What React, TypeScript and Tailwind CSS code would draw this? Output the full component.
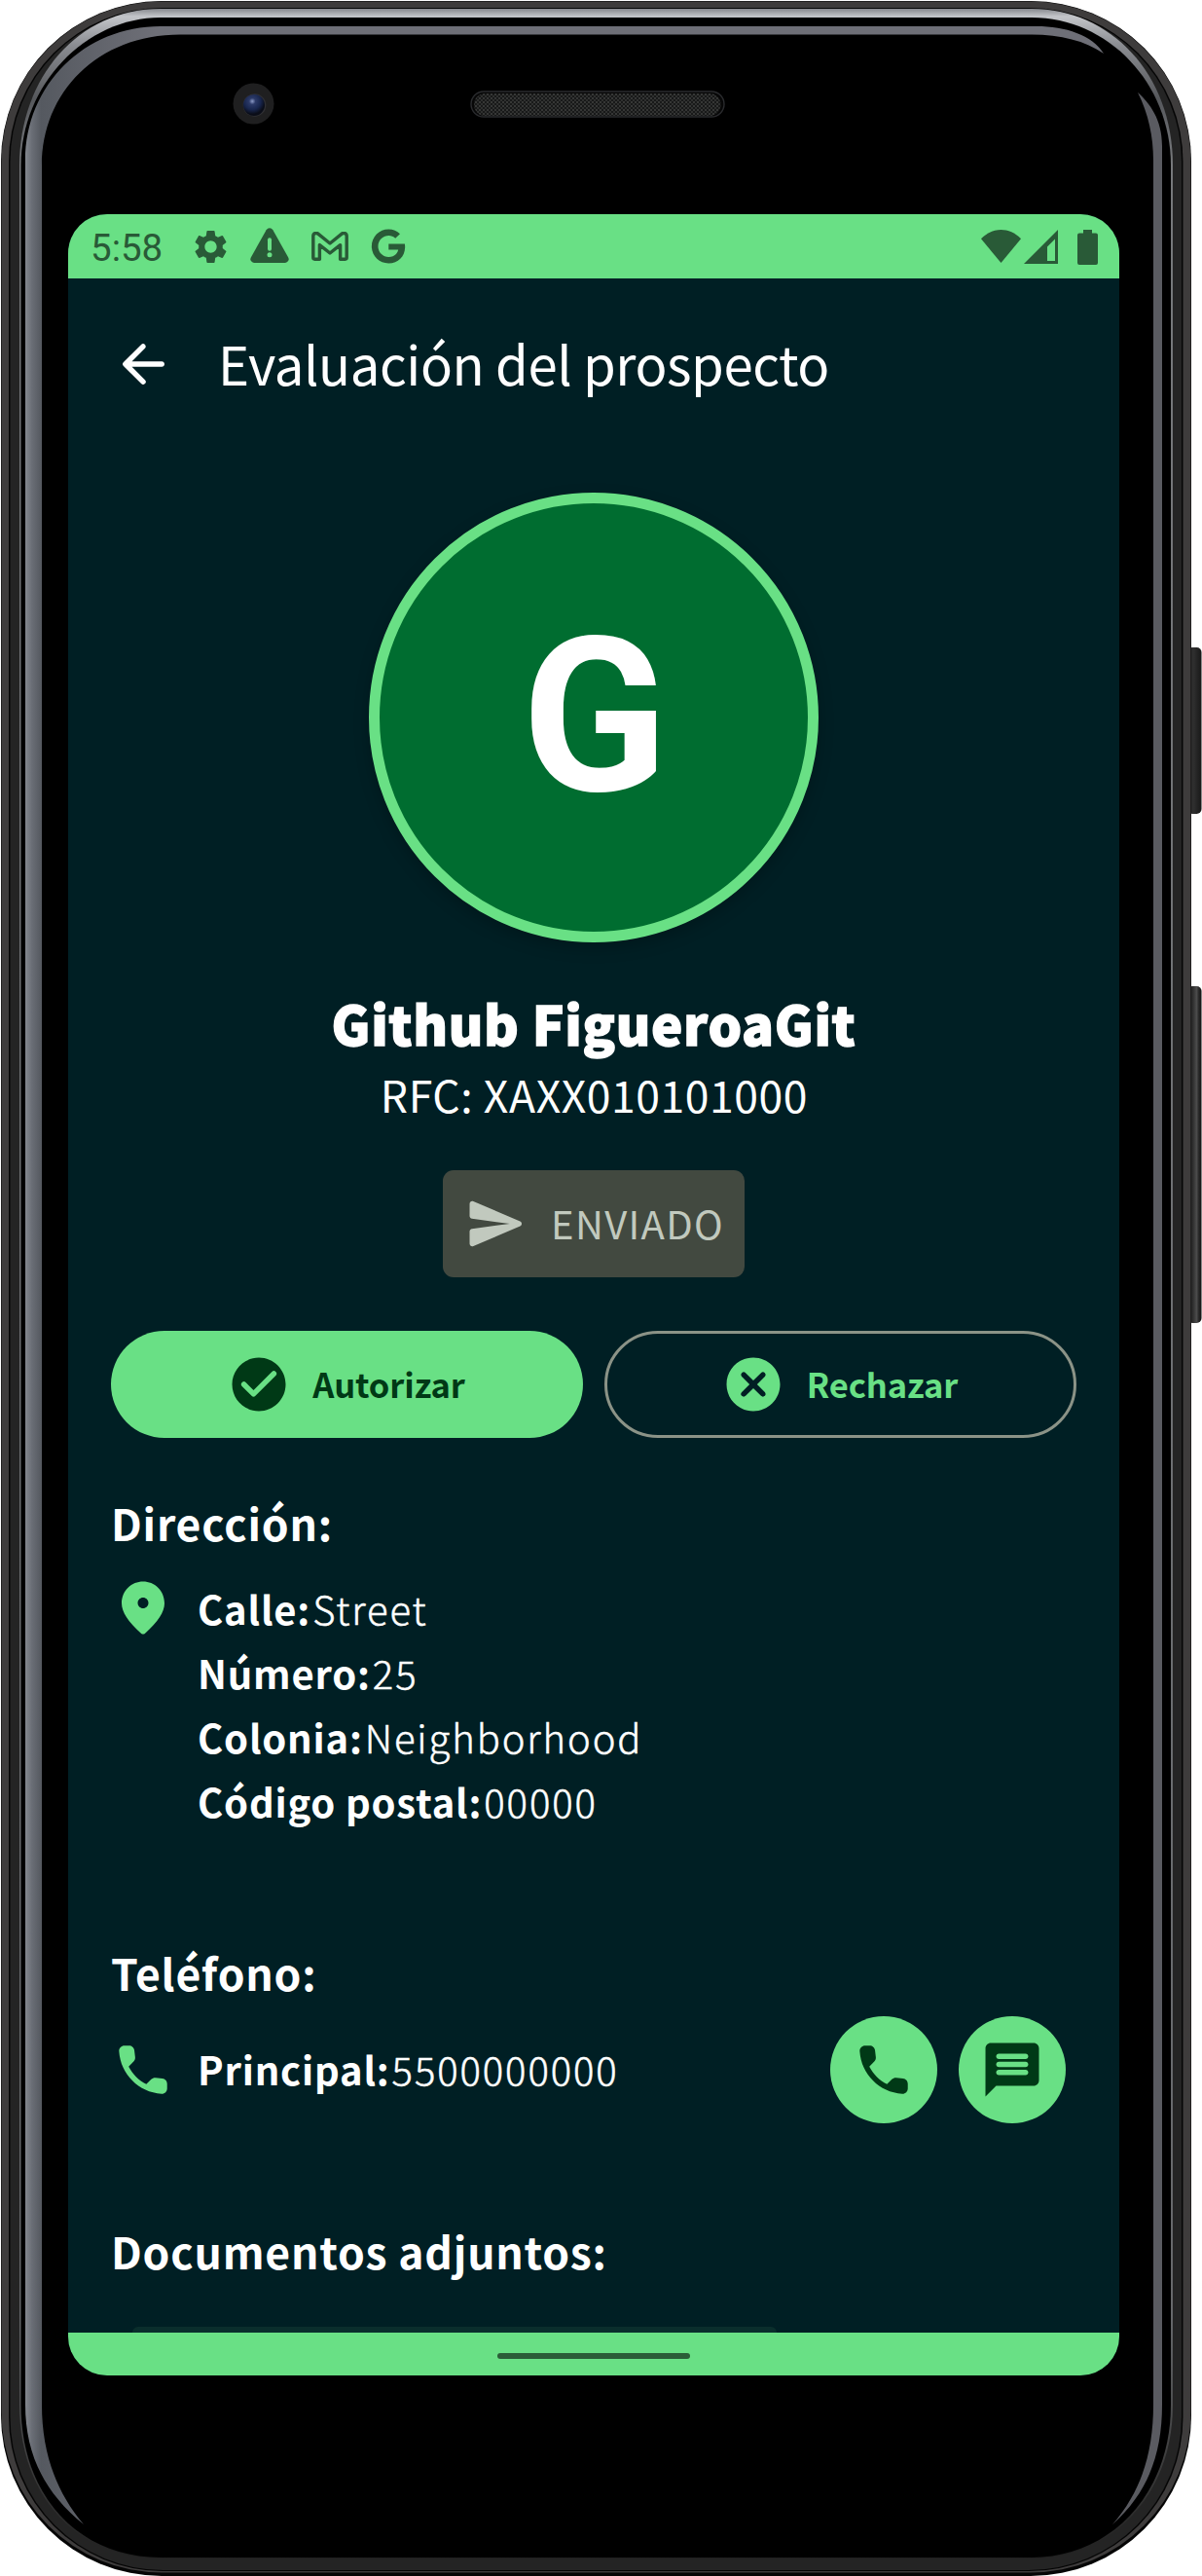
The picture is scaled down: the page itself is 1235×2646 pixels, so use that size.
import React from 'react';
import { MdSettings } from 'react-icons/md';
import { FaGoogle } from 'react-icons/fa';

const PATHS = {
  back: 'M19 11H7.83l4.88-4.88c.39-.39.39-1.03 0-1.42a.996.996 0 0 0-1.41 0l-6.59 6.59a.996.996 0 0 0 0 1.41l6.59 6.59a.996.996 0 1 0 1.41-1.41L7.83 13H19c.55 0 1-.45 1-1s-.45-1-1-1z',
  send: 'M3.4 20.4l17.45-7.48c.81-.35.81-1.49 0-1.84L3.4 3.6c-.66-.29-1.39.2-1.39.91L2 9.12c0 .5.37.93.87.99L17 12 2.87 13.88c-.5.07-.87.5-.87 1l.01 4.61c0 .71.73 1.2 1.39.91z',
  check:
    'M12 2C6.48 2 2 6.48 2 12s4.48 10 10 10 10-4.48 10-10S17.52 2 12 2zM9.29 16.29L5.7 12.7a.996.996 0 1 1 1.41-1.41L10 14.17l6.88-6.88a.996.996 0 1 1 1.41 1.41l-7.59 7.59a.996.996 0 0 1-1.41 0z',
  cancel:
    'M12 2C6.47 2 2 6.47 2 12s4.47 10 10 10 10-4.47 10-10S17.53 2 12 2zm4.3 14.3c-.39.39-1.02.39-1.41 0L12 13.41 9.11 16.3c-.39.39-1.02.39-1.41 0a.996.996 0 0 1 0-1.41L10.59 12 7.7 9.11c-.39-.39-.39-1.02 0-1.41.39-.39 1.02-.39 1.41 0L12 10.59l2.89-2.89c.39-.39 1.02-.39 1.41 0 .39.39.39 1.02 0 1.41L13.41 12l2.89 2.89c.38.38.38 1.02 0 1.41z',
  pin: 'M12 2C7.8 2 4 5.22 4 10.2c0 3.18 2.45 6.92 7.34 11.23.38.33.95.33 1.33 0C17.55 17.12 20 13.38 20 10.2 20 5.22 16.2 2 12 2zm0 10c-1.1 0-2-.9-2-2s.9-2 2-2 2 .9 2 2-.9 2-2 2z',
  call: 'M19.23 15.26l-2.54-.29c-.61-.07-1.21.14-1.64.57l-1.84 1.84c-2.83-1.44-5.15-3.75-6.59-6.59l1.85-1.85c.43-.43.64-1.03.57-1.64l-.29-2.52c-.12-1.01-.97-1.77-1.99-1.77H5.03c-1.13 0-2.07.94-2 2.07.53 8.54 7.36 15.36 15.89 15.89 1.13.07 2.07-.87 2.07-2v-1.73c.01-1.01-.75-1.86-1.76-1.98z',
  chat: 'M20 2H4c-1.1 0-1.99.9-1.99 2L2 22l4-4h14c1.1 0 2-.9 2-2V4c0-1.1-.9-2-2-2zM17 14H7c-.55 0-1-.45-1-1s.45-1 1-1h10c.55 0 1 .45 1 1s-.45 1-1 1zm0-3H7c-.55 0-1-.45-1-1s.45-1 1-1h10c.55 0 1 .45 1 1s-.45 1-1 1zm0-3H7c-.55 0-1-.45-1-1s.45-1 1-1h10c.55 0 1 .45 1 1s-.45 1-1 1z',
};

function Icon({ name, className = '' }: { name: keyof typeof PATHS; className?: string }) {
  return (
    <svg viewBox="0 0 24 24" fill="currentColor" className={`size-[66px] shrink-0 ${className}`}>
      <path d={PATHS[name]} />
    </svg>
  );
}

function DeviceFrame() {
  return (
    <svg viewBox="0 0 1235 2646" className="absolute inset-0 h-full w-full" aria-hidden="true">
      <defs>
        <linearGradient id="chrome" gradientUnits="userSpaceOnUse" x1="0" y1="9" x2="0" y2="2640">
          <stop offset="0" stopColor="#86888d" />
          <stop offset="0.003" stopColor="#c3c5c9" />
          <stop offset="0.014" stopColor="#8b8d92" />
          <stop offset="0.035" stopColor="#56585c" />
          <stop offset="0.06" stopColor="#77797c" />
          <stop offset="0.9" stopColor="#66686b" />
          <stop offset="0.97" stopColor="#333333" />
          <stop offset="1" stopColor="#1c1c1c" />
        </linearGradient>
        <linearGradient id="leftGlow" gradientUnits="userSpaceOnUse" x1="26" y1="0" x2="160" y2="0">
          <stop offset="0" stopColor="#84888f" />
          <stop offset="0.05" stopColor="#6a6e76" />
          <stop offset="0.12" stopColor="#555960" />
          <stop offset="1" stopColor="#6e6f77" />
        </linearGradient>
        <linearGradient id="button" x1="0" x2="1">
          <stop offset="0" stopColor="#080808" />
          <stop offset="0.35" stopColor="#2a2a2a" />
          <stop offset="0.65" stopColor="#4c4c4c" />
          <stop offset="0.8" stopColor="#2a2a2a" />
          <stop offset="1" stopColor="#101010" />
        </linearGradient>
        <linearGradient id="powerButton" x1="0" x2="1">
          <stop offset="0" stopColor="#080808" />
          <stop offset="0.4" stopColor="#303030" />
          <stop offset="1" stopColor="#181818" />
        </linearGradient>
        <radialGradient id="lens" cx="0.42" cy="0.32" r="0.6">
          <stop offset="0" stopColor="#8d9cc8" />
          <stop offset="0.25" stopColor="#2c3a68" />
          <stop offset="0.65" stopColor="#18264e" />
          <stop offset="1" stopColor="#0a0d18" />
        </radialGradient>
        <pattern id="mesh" width="4" height="4" patternUnits="userSpaceOnUse">
          <rect width="4" height="4" fill="#181919" />
          <circle cx="1" cy="1" r="0.8" fill="#5b5d5b" />
          <circle cx="3" cy="3" r="0.8" fill="#4b4d4b" />
        </pattern>
      </defs>
      <rect x="1220" y="665" width="14.5" height="171" rx="5" fill="url(#powerButton)" />
      <rect x="1220" y="1013" width="14.5" height="346" rx="5" fill="url(#button)" />
      <rect x="1" y="1" width="1223" height="2645" rx="165" fill="#050505" />
      <rect x="1.5" y="1.5" width="1222" height="2641" rx="164.5" fill="#3e3c3c" />
      <rect x="9" y="8" width="1206.5" height="2633" rx="158" fill="#050505" />
      <rect x="10.5" y="9" width="1203.5" height="2631" rx="157" fill="#242424" />
      <path d="M20 200 V170 C20 80 80 9 165 9 H1060 C1140 9 1205 75 1205 170 V2470 C1205 2565 1140 2628 1060 2628 H165 C80 2628 20 2565 20 2470Z" fill="url(#chrome)" />
      <path d="M21.5 200 V170 C21.5 87 88 18 165 18 H1060 C1138 18 1203 85 1203 170 V2470 C1203 2565 1138 2627 1060 2627 H165 C82 2627 21.5 2565 21.5 2470Z" fill="#000" />
      <path
        d="M86 2593 C45 2560 26 2520 26 2470 V165 C26 87 87 27 165 27 H1065 C1095 27 1122 36 1134 55 C1115 42 1090 35.5 1060 35.5 H185 C100 35.5 43 95 43 170 V2470 C43 2520 58 2560 86 2593Z"
        fill="url(#leftGlow)"
      />
      <path
        d="M1169 95 C1181 106 1194 122 1194 150 V2470 C1194 2520 1180 2560 1143 2593 C1172 2560 1185 2520 1185 2470 V165 C1185 140 1180 117 1169 95Z"
        fill="#5a5b61"
      />
      <circle cx="260.5" cy="106.5" r="21" fill="#1f1f20" />
      <circle cx="261.5" cy="108" r="11.8" fill="#303034" />
      <circle cx="261" cy="108" r="11" fill="url(#lens)" />
      <rect x="484" y="94" width="260" height="26" rx="13" fill="#070707" stroke="#2a2b2e" strokeWidth="1.4" />
      <rect x="487" y="96" width="253.5" height="23" rx="11.5" fill="url(#mesh)" />
    </svg>
  );
}

function StatusBar() {
  return (
    <div className="flex h-[66px] shrink-0 items-center justify-between bg-[#69e085] pl-[23px] pr-[22px] text-[#295a37]">
      <div className="flex items-center">
        <span className="w-[106px] pt-[3px] font-[Roboto,sans-serif] text-[38.5px] leading-[60px]">5:58</span>
        <MdSettings className="-ml-[3px] size-[41px]" />
        <svg viewBox="0 0 40 36" className="ml-[20px] mt-[-2px] h-[36px] w-[40px]">
          <path
            d="M16.6 2.2a4 4 0 0 1 6.8 0L39.2 30.5A3.8 3.8 0 0 1 36 36H4a3.8 3.8 0 0 1-3.2-5.5z"
            fill="currentColor"
          />
          <path d="M20 12.2v9.6" stroke="#69e085" strokeWidth="4" strokeLinecap="round" />
          <circle cx="20" cy="27.8" r="2.5" fill="#69e085" />
        </svg>
        <svg viewBox="0 0 38 30" className="ml-[23px] h-[30px] w-[38px]" fill="none" stroke="currentColor" strokeWidth="3.4">
          <path
            d="M1.8 4.6C1.8 1.6 4.8.6 6.8 2.2L19 12 31.2 2.2c2-1.6 5-.6 5 2.4V26.6a1.6 1.6 0 0 1-1.6 1.6H29.6V13.6L19 22 8.4 13.6v14.6H3.4a1.6 1.6 0 0 1-1.6-1.6z"
            strokeLinejoin="round"
          />
        </svg>
        <FaGoogle className="ml-[23px] size-[36px]" />
      </div>
      <div className="flex items-center">
        <svg viewBox="0 0 41 34" className="h-[34px] w-[41px]">
          <path d="M0 9.3C12-3 29-3 41 9.3L20.5 34z" fill="currentColor" />
        </svg>
        <svg viewBox="0 0 35 35" className="ml-[3px] mt-[1px] size-[35px]">
          <path d="M35 0v35H0zM32 9.5l-8 8V32h8z" fill="currentColor" fillRule="evenodd" />
        </svg>
        <svg viewBox="0 0 21 36" className="ml-[20px] mt-[1px] h-[36px] w-[21px]">
          <path d="M6 0h9v3.5h4a2 2 0 0 1 2 2V34a2 2 0 0 1-2 2H2a2 2 0 0 1-2-2V5.5a2 2 0 0 1 2-2h4z" fill="currentColor" />
        </svg>
      </div>
    </div>
  );
}

function SectionTitle({ children }: { children: React.ReactNode }) {
  return <h2 className="text-[44.5px] font-bold leading-[66px] tracking-[0.8px]">{children}</h2>;
}

function Field({ label, value }: { label: string; value: string }) {
  return (
    <div className="flex whitespace-nowrap text-[40px] leading-[66px]">
      <span className="font-bold tracking-[0.8px]">{label}</span>
      <span className="pl-0.5 font-light tracking-[1.9px] [-webkit-text-stroke:0.5px]">{value}</span>
    </div>
  );
}

const ADDRESS = [
  { label: 'Calle:', value: 'Street' },
  { label: 'Número:', value: '25' },
  { label: 'Colonia:', value: 'Neighborhood' },
  { label: 'Código postal:', value: '00000' },
];

export default function App() {
  return (
    <div className="relative h-[2646px] w-[1235px] overflow-hidden bg-white pl-[70px] pt-[220px]">
      <DeviceFrame />
      <div className="relative flex h-[2220px] w-[1080px] flex-col overflow-hidden rounded-[40px] bg-[#001f24] font-['Noto_Sans_CJK_SC',sans-serif] text-white">
        <StatusBar />
        <header className="flex h-[176px] shrink-0 items-center pl-[44px]">
          <Icon name="back" />
          <h1 className="mb-[3px] ml-[44px] text-[54.5px] leading-[66px] tracking-[-0.44px]">Evaluación del prospecto</h1>
        </header>
        <main className="flex min-h-0 flex-1 flex-col overflow-hidden px-[44px]">
          <section className="mt-[44px] flex flex-col items-center">
            <div className="flex size-[462px] items-center justify-center rounded-full border-[11px] border-[#69e085] bg-[#006d30] font-[Roboto,sans-serif] text-[220px] font-bold leading-none shadow-[0_6px_16px_rgba(0,0,0,0.22)]">
              <span className="ml-[2px]">G</span>
            </div>
            <div className="mt-[49px] text-[54.5px] font-black leading-[67px] tracking-[0.66px] [-webkit-text-stroke:1.3px]">
              Github FigueroaGit
            </div>
            <div className="pl-px text-[44.5px] leading-[79px] tracking-[0.56px]">RFC: XAXX010101000</div>
            <div className="mt-[39px] flex h-[110px] w-[310px] items-center rounded-[11px] bg-[#424940] pl-[22px] text-[#c1c9be]">
              <Icon name="send" />
              <span className="-mt-[3px] ml-[23px] text-[40px] leading-[66px] tracking-[1.33px]">ENVIADO</span>
            </div>
          </section>
          <div className="mt-[55px] flex gap-[22px] text-[34.5px] font-bold leading-[66px] tracking-[-0.1px]">
            <button className="flex h-[110px] w-[485px] items-center justify-center gap-[22px] rounded-full bg-[#69e085] pr-[2px] text-[#003916]">
              <Icon name="check" />
              <span className="-mt-[3px]">Autorizar</span>
            </button>
            <button className="flex h-[110px] w-[485px] items-center justify-center gap-[22px] rounded-full border-[3px] border-[#8b9387] pr-[2px] text-[#69e085]">
              <Icon name="cancel" />
              <span className="-mt-[3px]">Rechazar</span>
            </button>
          </div>
          <section className="mt-[54px]">
            <SectionTitle>Dirección:</SectionTitle>
            <div className="mt-[22px] flex gap-[23px]">
              <Icon name="pin" className="text-[#69e085]" />
              <div>
                {ADDRESS.map((row) => (
                  <Field key={row.label} label={row.label} value={row.value} />
                ))}
              </div>
            </div>
          </section>
          <section className="mt-[110px]">
            <SectionTitle>Teléfono:</SectionTitle>
            <div className="mt-[12px] flex h-[110px] items-center pr-[11px]">
              <Icon name="call" className="text-[#69e085]" />
              <div className="-mt-[3px] ml-[23px] flex-1">
                <Field label="Principal:" value="5500000000" />
              </div>
              <div className="flex gap-[22px] text-[#003916]">
                <button className="flex size-[110px] items-center justify-center rounded-full bg-[#69e085]">
                  <Icon name="call" />
                </button>
                <button className="flex size-[110px] items-center justify-center rounded-full bg-[#69e085]">
                  <Icon name="chat" />
                </button>
              </div>
            </div>
          </section>
          <section className="mt-[98px]">
            <SectionTitle>Documentos adjuntos:</SectionTitle>
            <div className="ml-[22px] mt-[45px] h-[200px] w-[662px] rounded-[6px] bg-[#0a2e2c]" />
          </section>
        </main>
        <footer className="flex h-[44px] shrink-0 items-center justify-center bg-[#69e085]">
          <div className="mt-[4px] h-[6px] w-[198px] rounded-full bg-[#2b5d38]" />
        </footer>
      </div>
    </div>
  );
}
